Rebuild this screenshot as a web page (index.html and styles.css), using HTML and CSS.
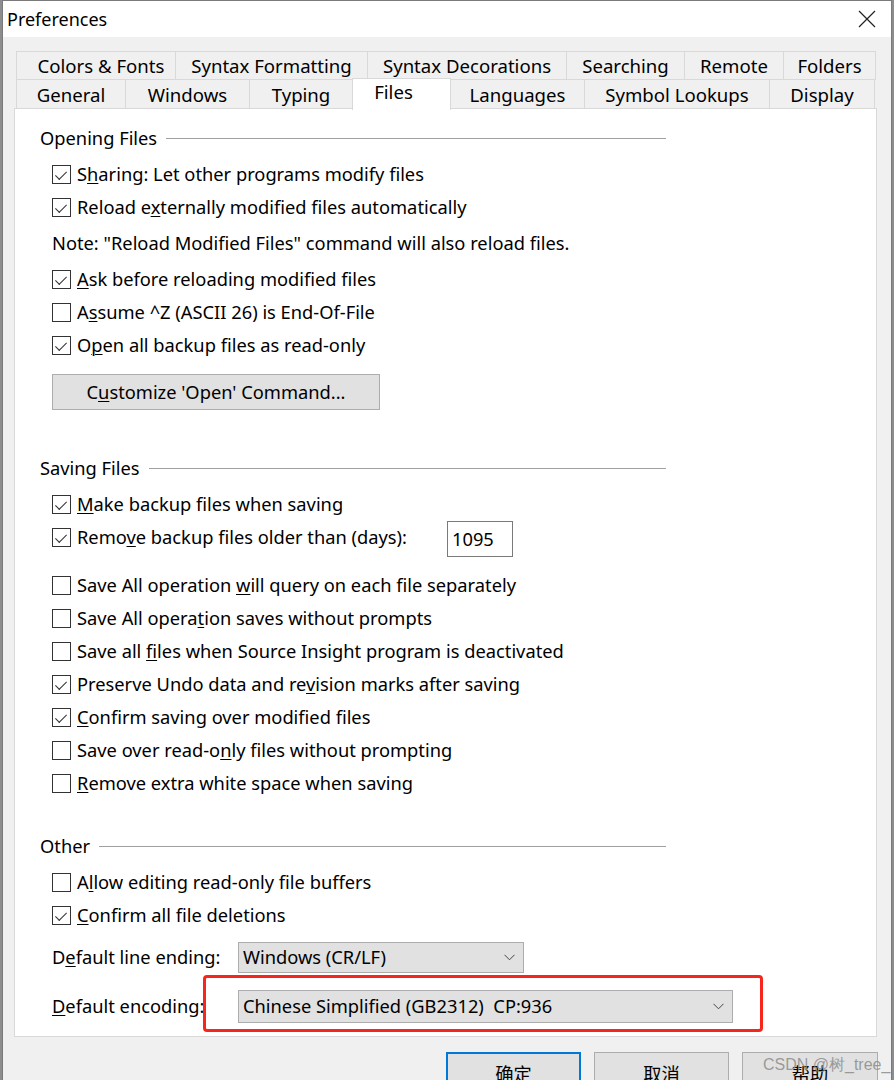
FILE: index.html
```html
<!DOCTYPE html>
<html>
<head>
<meta charset="utf-8">
<link rel="stylesheet" href="styles.css">
</head>
<body>
<div class="window">
  <div class="titlebar">
    <span class="title">Preferences</span>
    <svg class="close" width="18" height="18" viewBox="0 0 18 18"><path d="M1 1 L17 17 M17 1 L1 17" stroke="#222" stroke-width="1.2" fill="none"/></svg>
  </div>
  <div class="body">
    <div class="tabs">
      <div class="tabrow row1">
        <div class="tab first" style="width:159px">Colors &amp; Fonts</div>
        <div class="tab" style="width:192px">Syntax Formatting</div>
        <div class="tab" style="width:199px">Syntax Decorations</div>
        <div class="tab" style="width:118px">Searching</div>
        <div class="tab" style="width:99px">Remote</div>
        <div class="tab last" style="width:93px">Folders</div>
      </div>
      <div class="tabrow row2">
        <div class="tab" style="width:109px">General</div>
        <div class="tab" style="width:124px">Windows</div>
        <div class="tab" style="width:103px">Typing</div>
        <div class="tab sel" style="width:99px">Files</div>
        <div class="tab" style="width:134px">Languages</div>
        <div class="tab" style="width:185px">Symbol Lookups</div>
        <div class="tab last" style="width:106px">Display</div>
      </div>
    </div>
    <div class="panel">
      <div class="group g1">
        <div class="ghead"><span>Opening Files</span><i></i></div>
        <div class="row"><span class="cb on"></span><span>S<u>h</u>aring: Let other programs modify files</span></div>
        <div class="row"><span class="cb on"></span><span>Reload e<u>x</u>ternally modified files automatically</span></div>
        <div class="note">Note: "Reload Modified Files" command will also reload files.</div>
        <div class="row"><span class="cb on"></span><span><u>A</u>sk before reloading modified files</span></div>
        <div class="row"><span class="cb"></span><span>A<u>s</u>sume ^Z (ASCII 26) is End-Of-File</span></div>
        <div class="row"><span class="cb on"></span><span>O<u>p</u>en all backup files as read-only</span></div>
        <div class="btn">C<u>u</u>stomize 'Open' Command...</div>
      </div>
      <div class="group g2">
        <div class="ghead"><span>Saving Files</span><i></i></div>
        <div class="row"><span class="cb on"></span><span><u>M</u>ake backup files when saving</span></div>
        <div class="row tall"><div class="lbl"><span class="cb on"></span><span>Remo<u>v</u>e backup files older than (days):</span></div><div class="input">1095</div></div>
        <div class="row"><span class="cb"></span><span>Save All operation <u>w</u>ill query on each file separately</span></div>
        <div class="row"><span class="cb"></span><span>Save All opera<u>t</u>ion saves without prompts</span></div>
        <div class="row"><span class="cb"></span><span>Save all <u>f</u>iles when Source Insight program is deactivated</span></div>
        <div class="row"><span class="cb on"></span><span>Preserve Undo data and re<u>v</u>ision marks after saving</span></div>
        <div class="row"><span class="cb on"></span><span><u>C</u>onfirm saving over modified files</span></div>
        <div class="row"><span class="cb"></span><span>Save over read-o<u>n</u>ly files without prompting</span></div>
        <div class="row"><span class="cb"></span><span><u>R</u>emove extra white space when saving</span></div>
      </div>
      <div class="group g3">
        <div class="ghead"><span>Other</span><i></i></div>
        <div class="row"><span class="cb"></span><span>A<u>l</u>low editing read-only file buffers</span></div>
        <div class="row"><span class="cb on"></span><span><u>C</u>onfirm all file deletions</span></div>
        <div class="field f1"><span class="flabel">D<u>e</u>fault line ending:</span><div class="select s1"><span>Windows (CR/LF)</span><svg width="11" height="7" viewBox="0 0 11 7"><path d="M0.5 0.8 L5.5 5.8 L10.5 0.8" stroke="#444" stroke-width="1" fill="none"/></svg></div></div>
        <div class="field f2"><span class="flabel"><u>D</u>efault encoding:</span><div class="select s2"><span>Chinese Simplified (GB2312)&nbsp; CP:936</span><svg width="11" height="7" viewBox="0 0 11 7"><path d="M0.5 0.8 L5.5 5.8 L10.5 0.8" stroke="#444" stroke-width="1" fill="none"/></svg></div><div class="redbox"></div></div>
      </div>
    </div>
    <div class="buttons">
      <div class="dbtn ok">确定</div>
      <div class="dbtn">取消</div>
      <div class="dbtn help">帮助<span class="wm">CSDN @树_tree_</span></div>
    </div>
  </div>
</div>
</body>
</html>
```
FILE: styles.css
```css
html, body {
  margin: 0;
  padding: 0;
  height: 1080px;
  overflow: hidden;
}
body {
  background: #8d8d8f;
  font-family: "Noto Sans", "Noto Sans CJK SC", sans-serif;
  font-size: 18.3px;
  color: #000;
}
.window {
  margin-left: 2px;
  width: 888px;
  height: 1100px;
  border: 1px solid #7a7a7a;
  border-bottom: none;
  background: #f0f0f0;
}
.titlebar {
  height: 36px;
  background: #fff;
  display: flex;
  align-items: center;
  justify-content: space-between;
  padding: 0 15px 0 4px;
}
.title {
  font-size: 18px;
}
.close {
  display: block;
}
.body {
  padding: 14px 0 0 0;
}
.tabs {
  padding-left: 13px;
}
.tabrow {
  display: flex;
  height: 29px;
  align-items: flex-start;
}
.tab {
  box-sizing: border-box;
  height: 29px;
  border-left: 1px solid #d9d9d9;
  display: flex;
  align-items: center;
  justify-content: center;
  background: #f0f0f0;
  line-height: 1;
  padding-top: 1px;
  font-size: 18.6px;
  white-space: nowrap;
}
.tab.first {
  padding-left: 10px;
}
.tab.last {
  border-right: 1px solid #d9d9d9;
}
.row1 .tab {
  border-top: 1px solid #d9d9d9;
  border-bottom: 1px solid #d9d9d9;
}
.row2 .tab.sel {
  position: relative;
  z-index: 2;
  background: #fff;
  height: 32px;
  margin-top: -2px;
  margin-bottom: -1px;
  border-top: 1px solid #d9d9d9;
  border-right: 1px solid #d9d9d9;
  margin-right: -1px;
  padding-bottom: 6px;
  padding-right: 16px;
}
.panel {
  position: relative;
  margin-left: 11px;
  width: 863px;
  height: 929px;
  box-sizing: border-box;
  margin-top: -1px;
  background: #fff;
  border: 1px solid #d9d9d9;
  padding: 17px 0 0 25px;
}
.group {
  width: 626px;
}
.ghead {
  display: flex;
  align-items: center;
  height: 24px;
  margin-bottom: 8px;
}
.ghead span {
  padding-bottom: 2px;
}
.ghead i {
  flex: 1;
  height: 1px;
  background: #a0a0a0;
  margin-left: 9px;
}
.row {
  display: flex;
  align-items: center;
  height: 33px;
  padding-left: 12px;
  white-space: nowrap;
}
.row > span:last-child,
.lbl > span:last-child {
  padding-bottom: 2px;
}
.row.tall {
  height: 48px;
  align-items: flex-start;
}
.row.tall .lbl {
  display: flex;
  align-items: center;
  height: 33px;
  width: 395px;
  flex: none;
}
.cb {
  box-sizing: border-box;
  width: 19px;
  height: 19px;
  border: 1px solid #333;
  background: #fff;
  margin-right: 6px;
  flex: none;
  position: relative;
}
.cb.on::after {
  content: "";
  position: absolute;
  left: 4px;
  top: 2px;
  width: 9px;
  height: 5px;
  border-left: 1.3px solid #333;
  border-bottom: 1.3px solid #333;
  transform: translate(-1px, 3px) rotate(-45deg) scaleX(1.1);
  transform-origin: center;
}
u {
  text-decoration: underline;
  text-underline-offset: 2px;
  text-decoration-thickness: 1px;
}
.note {
  height: 39px;
  display: flex;
  align-items: center;
  padding-left: 12px;
  padding-bottom: 2px;
  box-sizing: border-box;
  white-space: nowrap;
}
.btn {
  margin: 12px 0 0 12px;
  box-sizing: border-box;
  width: 328px;
  height: 36px;
  background: #e1e1e1;
  border: 1px solid #adadad;
  display: flex;
  align-items: center;
  justify-content: center;
  padding-bottom: 2px;
  white-space: nowrap;
}
.g2 {
  margin-top: 46px;
}
.input {
  box-sizing: border-box;
  width: 66px;
  height: 36px;
  border: 1px solid #7a7a7a;
  padding-left: 4px;
  padding-bottom: 2px;
  display: flex;
  align-items: center;
  flex: none;
}
.g3 {
  margin-top: 34px;
}
.field {
  position: relative;
  display: flex;
  align-items: center;
  padding-left: 12px;
  white-space: nowrap;
}
.f1 {
  margin-top: 10px;
}
.f2 {
  margin-top: 17px;
}
.flabel {
  width: 186px;
  flex: none;
  padding-bottom: 2px;
}
.select {
  box-sizing: border-box;
  background: #e1e1e1;
  border: 1px solid #adadad;
  display: flex;
  align-items: center;
  justify-content: space-between;
  padding: 0 8px 0 4px;
  flex: none;
}
.select span {
  padding-bottom: 2px;
}
.s1 {
  width: 286px;
  height: 31px;
}
.s2 {
  width: 495px;
  height: 33px;
}
.redbox {
  position: absolute;
  left: 163px;
  top: -15px;
  width: 560px;
  height: 57px;
  box-sizing: border-box;
  border: 3px solid #f7261c;
  border-radius: 4px;
}
.buttons {
  display: flex;
  padding: 15px 0 0 443px;
  gap: 13px;
}
.dbtn {
  box-sizing: border-box;
  width: 135px;
  height: 38px;
  background: #e1e1e1;
  border: 1px solid #adadad;
  display: flex;
  align-items: center;
  justify-content: center;
  padding-top: 4px;
  position: relative;
}
.dbtn.ok {
  border: 2px solid #0078d7;
}
.dbtn.help {
  width: 136px;
  color: #000;
}
.wm {
  position: absolute;
  left: 20px;
  top: 2px;
  font-family: "Liberation Sans", sans-serif;
  font-size: 16px;
  color: rgba(140, 140, 140, 0.85);
  white-space: nowrap;
}
```
